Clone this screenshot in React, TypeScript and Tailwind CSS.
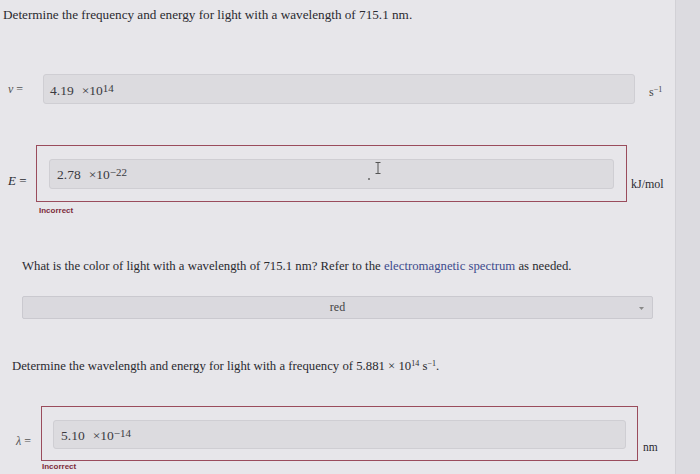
import React from "react"

const serif = { fontFamily: '"Liberation Serif", "Times New Roman", serif' }

function Sci({ base, exp }: { base: string; exp: string }) {
  return (
    <span className="text-[13.5px] text-[#3a3a40]">
      {base}
      <span className="ml-[8px]">×10</span>
      <sup className="text-[11px] relative -top-[3px]">{exp}</sup>
    </span>
  )
}

function Incorrect({ className = "mt-[3px]" }: { className?: string }) {
  return (
    <div className={"font-['Liberation_Sans',sans-serif] text-[8px] font-bold text-[#7d2b3b] " + className}>
      Incorrect
    </div>
  )
}

function Cursor() {
  return (
    <svg className="absolute left-[325px] top-[2px]" width="6" height="12" viewBox="0 0 6 12">
      <path d="M0.5 0.5h5M0.5 11.5h5M3 0.5v11" stroke="#555" strokeWidth="1" fill="none" />
    </svg>
  )
}

export default function App() {
  return (
    <div className="w-[700px] h-[474px] overflow-hidden flex bg-[#dcdbe0]" style={serif}>
      <div className="w-[676px] h-full bg-[#e7e6ea] border-r border-[#d2d1d6] text-[#2a2a30] relative">
        <div className="pt-[5px] pl-[3px] text-[13.2px]">
          Determine the frequency and energy for light with a wavelength of 715.1 nm.
        </div>

        {/* frequency */}
        <div className="flex items-center mt-[49px]">
          <div className="w-[43px] pl-[8px] text-[12px] text-[#555]">
            <i>v</i> =
          </div>
          <div className="w-[592px] h-[30px] rounded-[3px] bg-[#dcdbdf] border border-[#cfced3] pl-[6px] pt-[3px]">
            <Sci base="4.19" exp="14" />
          </div>
          <div className="ml-[14px] text-[12px] text-[#444] mt-[6px]">
            s<sup className="text-[8px]">−1</sup>
          </div>
        </div>

        {/* energy */}
        <div className="flex mt-[41px]">
          <div className="w-[36px] pl-[8px] pt-[26px] text-[13px]">
            <i>E</i> =
          </div>
          <div>
            <div className="w-[591px] h-[57px] border-[1.5px] border-[#9a4c5c] px-[12px] pt-[13px]">
              <div className="relative h-[30px] rounded-[3px] bg-[#dcdbdf] border border-[#cfced3] pl-[7px] pt-[2px]">
                <Sci base="2.78" exp="−22" />
                <Cursor />
                <span className="absolute left-[318px] top-[18px] w-[2px] h-[2px] rounded-full bg-[#666]"></span>
              </div>
            </div>
            <div className="pl-[3px]">
              <Incorrect />
            </div>
          </div>
          <div className="ml-[4px] pt-[30px] text-[12px]">kJ/mol</div>
        </div>

        {/* color */}
        <div className="mt-[40px] pl-[22px] text-[12.75px]">
          What is the color of light with a wavelength of 715.1 nm? Refer to the{" "}
          <span className="text-[#3d4b8c]">electromagnetic spectrum</span> as needed.
        </div>
        <div className="ml-[22px] mt-[20px] w-[631px] h-[23px] rounded-[2px] bg-[#dad9de] border border-[#cac9cf] flex items-center relative">
          <div className="flex-1 text-center text-[12px] text-[#444]">red</div>
          <svg className="absolute right-[8px] top-[10px]" width="5" height="4" viewBox="0 0 5 4">
            <path d="M0 0h5L2.5 3z" fill="#888" />
          </svg>
        </div>

        {/* wavelength */}
        <div className="mt-[38px] pl-[12px] text-[12.75px]">
          Determine the wavelength and energy for light with a frequency of 5.881 × 10
          <sup className="text-[8px]">14</sup> s<sup className="text-[8px]">−1</sup>.
        </div>
        <div className="flex mt-[30px]">
          <div className="w-[41px] pl-[16px] pt-[26px] text-[12px] text-[#555]">
            <i>λ</i> =
          </div>
          <div>
            <div className="w-[597px] h-[55px] border-[1.5px] border-[#9a4c5c] px-[11px] pt-[13px]">
              <div className="h-[29px] rounded-[3px] bg-[#dcdbdf] border border-[#cfced3] pl-[7px] pt-[2px]">
                <Sci base="5.10" exp="−14" />
              </div>
            </div>
            <div className="pl-[1px]">
              <Incorrect className="mt-0" />
            </div>
          </div>
          <div className="ml-[5px] pt-[33px] text-[11.5px]">nm</div>
        </div>
      </div>
    </div>
  )
}
